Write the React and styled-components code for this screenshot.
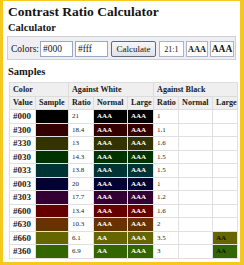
import React from 'react';
import styled, { createGlobalStyle } from 'styled-components';

const GlobalStyle = createGlobalStyle`
  html, body {
    margin: 0;
    padding: 0;
    background: #fff;
  }
  body {
    font-family: "Liberation Serif", "Times New Roman", serif;
    color: #111;
  }
`;

const Frame = styled.div`
  width: 244px;
  height: 265px;
  box-sizing: border-box;
  border-style: solid;
  border-color: #f4c81e;
  border-width: 1px 4px 3px 3px;
  padding: 3px 0 0 4px;
  background: #fff;
  display: flex;
  flex-direction: column;
  overflow: hidden;
`;

const Title = styled.h1`
  margin: 0 0 0 1px;
  font-size: 13.5px;
  line-height: 16px;
  font-weight: 700;
  color: #151515;
`;

const SubTitle = styled.h2`
  margin: ${props => props.$top}px 0 0 1px;
  font-size: 10.5px;
  line-height: 12px;
  font-weight: 700;
  color: #151515;
`;

const CalcBox = styled.div`
  margin-top: 2px;
  width: 229px;
  height: 24px;
  box-sizing: border-box;
  padding: 3px 1px 1px 3px;
  display: flex;
  align-items: center;
  gap: 2px;
  background: #efeef3;
  border: 1px solid #cfcfd6;
`;

const Label = styled.span`
  margin-right: -1px;
  font-size: 9.5px;
  color: #151515;
`;

const ColorInput = styled.input`
  width: 33px;
  height: 16px;
  box-sizing: border-box;
  margin: 0;
  padding: 0 2px;
  border: 1px solid #98a8c8;
  background: #fff;
  font-family: "Liberation Serif", serif;
  font-size: 9.5px;
  color: #151515;
  outline: none;
`;

const CalcButton = styled.button`
  width: 47px;
  height: 16px;
  box-sizing: border-box;
  margin: 0 1px;
  padding: 0;
  border: 1px solid #5d6b86;
  border-radius: 2px;
  background: linear-gradient(#f6f6f8, #e2e2e6);
  font-family: "Liberation Serif", serif;
  font-size: 9px;
  color: #151515;
`;

const ResultBox = styled.span`
  width: ${props => props.$w}px;
  height: 16px;
  box-sizing: border-box;
  display: flex;
  align-items: center;
  justify-content: center;
  border: 1px solid #a9b3c9;
  background: #fff;
  font-size: ${props => props.$size}px;
  font-weight: ${props => (props.$bold ? 700 : 400)};
  color: #151515;
`;

const Table = styled.table`
  margin: 4px 0 0 2px;
  width: 228px;
  table-layout: fixed;
  border-collapse: collapse;
  border: 1px solid #dcdcdc;
`;

const Col = styled.col`
  width: ${props => props.$w}px;
`;

const HeadCell = styled.th`
  padding: 0 1px 0 3px;
  height: ${props => props.$h}px;
  line-height: ${props => props.$h}px;
  background: #efefef;
  border: 1px solid #dcdcdc;
  text-align: left;
  font-size: 8.1px;
  font-weight: 700;
  color: #1a1a1a;
  white-space: nowrap;
  overflow: hidden;
`;

const Cell = styled.td`
  padding: 0 3px;
  height: 12.5px;
  line-height: 12.5px;
  border: 1px solid #e0e0e0;
  background: ${props => props.$bg || '#fff'};
  color: ${props => props.$fg || '#222'};
  font-size: ${props => props.$size || 7}px;
  font-weight: ${props => (props.$bold ? 700 : 400)};
  white-space: nowrap;
  overflow: hidden;
`;

const samples = [
  ['#000', 21, 1],
  ['#300', 18.4, 1.1],
  ['#330', 13, 1.6],
  ['#030', 14.3, 1.5],
  ['#033', 13.8, 1.5],
  ['#003', 20, 1],
  ['#303', 17.7, 1.2],
  ['#600', 13.4, 1.6],
  ['#630', 10.3, 2],
  ['#660', 6.1, 3.5],
  ['#360', 6.9, 3],
];

const widths = [26, 33, 25, 34, 26, 25, 34, 25];

const normalGrade = r => (r >= 7 ? 'AAA' : r >= 4.5 ? 'AA' : '');
const largeGrade = r => (r >= 4.5 ? 'AAA' : r >= 3 ? 'AA' : '');

const Grade = ({ grade, color, text }) => (
  grade
    ? <Cell $bg={color} $fg={text} $bold $size={7}>{grade}</Cell>
    : <Cell />
);

const App = () => (
  <>
    <GlobalStyle />
    <Frame>
      <Title>Contrast Ratio Calculator</Title>
      <SubTitle $top={2}>Calculator</SubTitle>
      <CalcBox>
        <Label>Colors:</Label>
        <ColorInput defaultValue="#000" />
        <ColorInput defaultValue="#fff" />
        <CalcButton type="button">Calculate</CalcButton>
        <ResultBox $w={26} $size={8}>21:1</ResultBox>
        <ResultBox $w={23} $size={8.3} $bold>AAA</ResultBox>
        <ResultBox $w={25} $size={9.5} $bold>AAA</ResultBox>
      </CalcBox>
      <SubTitle $top={6}>Samples</SubTitle>
      <Table>
        <colgroup>
          {widths.map((w, i) => <Col key={i} $w={w} />)}
        </colgroup>
        <thead>
          <tr>
            <HeadCell $h={13} colSpan={2}>Color</HeadCell>
            <HeadCell $h={13} colSpan={3}>Against White</HeadCell>
            <HeadCell $h={13} colSpan={3}>Against Black</HeadCell>
          </tr>
          <tr>
            {['Value', 'Sample', 'Ratio', 'Normal', 'Large', 'Ratio', 'Normal', 'Large'].map((h, i) => (
              <HeadCell $h={12.3} key={i}>{h}</HeadCell>
            ))}
          </tr>
        </thead>
        <tbody>
          {samples.map(([color, white, black]) => (
            <tr key={color}>
              <Cell $bold $size={9} $fg="#1a1a1a">{color}</Cell>
              <Cell $bg={color} />
              <Cell>{white}</Cell>
              <Grade grade={normalGrade(white)} color={color} text="#fff" />
              <Grade grade={largeGrade(white)} color={color} text="#fff" />
              <Cell>{black}</Cell>
              <Grade grade={normalGrade(black)} color={color} text="#111" />
              <Grade grade={largeGrade(black)} color={color} text="#111" />
            </tr>
          ))}
        </tbody>
      </Table>
    </Frame>
  </>
);

export default App;
